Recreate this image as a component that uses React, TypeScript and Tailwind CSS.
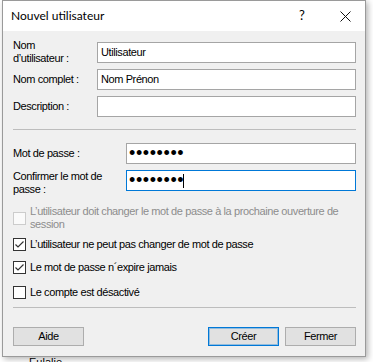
import React from "react"

const ui = { fontFamily: '"Liberation Sans", Arial, sans-serif' }
const title = { fontFamily: 'Lato, "Noto Sans", sans-serif' }

function Field({ value, focused }: { value?: string; focused?: boolean }) {
  return (
    <div
      className={`h-[21px] flex-1 bg-white border flex items-center pl-[3px] text-[11px] tracking-[-0.4px] text-black ${
        focused ? "border-[#0078d7]" : "border-[#a5a5a5]"
      }`}
    >
      {value}
    </div>
  )
}

function Secret({ caret }: { caret?: boolean }) {
  return (
    <div
      className={`h-[21px] flex-1 bg-white border flex items-center pl-[2px] ${
        caret ? "border-[#0078d7]" : "border-[#a5a5a5]"
      }`}
    >
      <span className="text-[18px] leading-[19px] tracking-[0.6px] text-black">••••••••</span>
      {caret && <span className="inline-block w-[1px] h-[14px] bg-black -ml-[1px]" />}
    </div>
  )
}

function Box({ checked, disabled }: { checked?: boolean; disabled?: boolean }) {
  return (
    <div
      className={`w-[13px] h-[13px] shrink-0 border flex items-center justify-center ${
        disabled ? "border-[#cccccc] bg-[#fafafa]" : "border-[#333333] bg-white"
      }`}
    >
      {checked && (
        <svg width="11" height="11" viewBox="0 0 11 11">
          <polyline points="1.5,5.5 4,8 9.5,2.5" fill="none" stroke="#333" strokeWidth="1.2" />
        </svg>
      )}
    </div>
  )
}

function Btn({ label, primary }: { label: string; primary?: boolean }) {
  return (
    <div
      className={`w-[71px] h-[19px] flex items-center justify-center bg-[#e1e1e1] border text-[11px] tracking-[-0.4px] text-black ${
        primary ? "border-[#0078d7] shadow-[inset_0_0_0_1px_rgba(0,120,215,0.35)]" : "border-[#adadad]"
      }`}
    >
      {label}
    </div>
  )
}

export default function App() {
  return (
    <div className="w-[373px] h-[362px] overflow-hidden bg-white" style={ui}>
      <div className="pl-[2px]">
        <div className="w-[364px] h-[357px] border border-[#9a9a9a] bg-white flex flex-col shadow-[2px_2px_6px_rgba(0,0,0,0.3)]">
          {/* Title bar */}
          <div className="h-[30px] flex items-center justify-between pl-[8px] pr-[10px] bg-white">
            <span className="text-[12px] text-black" style={title}>
              Nouvel utilisateur
            </span>
            <div className="flex items-center gap-[23px]">
              <span className="w-[20px] text-center text-[13px] text-black" style={title}>
                ?
              </span>
              <span className="w-[20px] flex justify-center">
                <svg width="11" height="11" viewBox="0 0 11 11">
                  <path d="M0.5 0.5 L10.5 10.5 M10.5 0.5 L0.5 10.5" stroke="#111" strokeWidth="1" />
                </svg>
              </span>
            </div>
          </div>

          {/* Body */}
          <div className="flex-1 bg-[#f0f0f0] pt-[11px] pl-[10px] pr-[9px] text-[11px] tracking-[-0.4px] text-black">
            <div className="flex flex-col gap-[6px]">
              <div className="h-[21px] flex items-center">
                <div className="w-[84px] leading-[13px] pb-[2px]">
                  Nom
                  <br />
                  d’utilisateur :
                </div>
                <Field value="Utilisateur" />
              </div>
              <div className="h-[21px] flex items-center">
                <div className="w-[84px]">Nom complet :</div>
                <Field value="Nom Prénon" />
              </div>
              <div className="h-[21px] flex items-center">
                <div className="w-[84px]">Description :</div>
                <Field />
              </div>
            </div>

            <div className="mt-[12px] h-[1px] bg-[#bdbdbd]" />

            <div className="mt-[13px] flex flex-col gap-[6px]">
              <div className="h-[21px] flex items-center">
                <div className="w-[113px]">Mot de passe :</div>
                <Secret />
              </div>
              <div className="h-[21px] flex items-center">
                <div className="w-[113px] leading-[13px] pt-[4px]">
                  Confirmer le mot de
                  <br />
                  passe :
                </div>
                <Secret caret />
              </div>
            </div>

            <div className="mt-[14px] flex items-center gap-[4px]">
              <Box disabled />
              <div className="leading-[13px] text-[#8d8d8d]">
                L’utilisateur doit changer le mot de passe à la prochaine ouverture de
                <br />
                session
              </div>
            </div>
            <div className="mt-[5px] h-[17px] flex items-center gap-[4px]">
              <Box checked />
              <span>L’utilisateur ne peut pas changer de mot de passe</span>
            </div>
            <div className="mt-[6px] h-[17px] flex items-center gap-[4px]">
              <Box checked />
              <span>Le mot de passe n´expire jamais</span>
            </div>
            <div className="mt-[8px] h-[17px] flex items-center gap-[4px]">
              <Box />
              <span>Le compte est désactivé</span>
            </div>

            <div className="mt-[6px] h-[1px] bg-[#bdbdbd]" />

            <div className="mt-[19px] flex items-center">
              <Btn label="Aide" />
              <div className="flex-1" />
              <div className="flex gap-[6px]">
                <Btn label="Créer" primary />
                <Btn label="Fermer" />
              </div>
            </div>
          </div>
        </div>
      </div>
      <div className="pl-[29px] text-[11px] leading-[11px] text-black">Eulalie</div>
    </div>
  )
}
